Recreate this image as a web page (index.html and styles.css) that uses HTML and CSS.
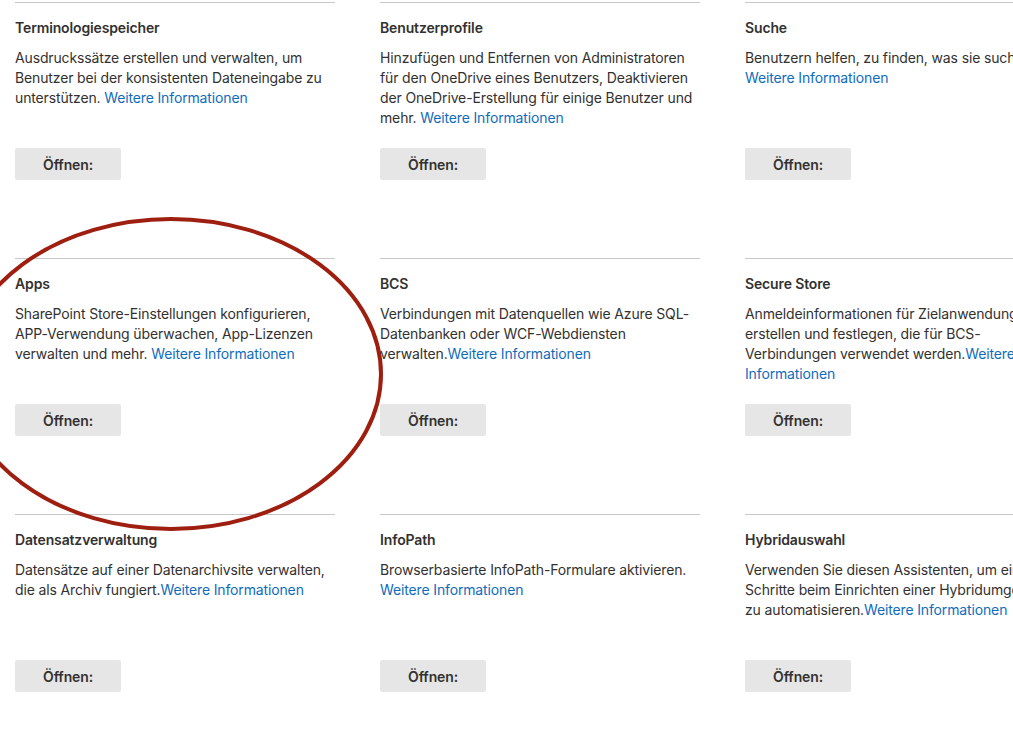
FILE: index.html
```html
<!DOCTYPE html>
<html lang="de">
<head>
<meta charset="utf-8">
<title>Weitere Features</title>
<link rel="stylesheet" href="styles.css">
</head>
<body>
<div class="page">
  <div class="grid">
    <section class="card">
      <h3 class="title">Terminologiespeicher</h3>
      <p class="desc">Ausdruckssätze erstellen und verwalten, um Benutzer bei der konsistenten Dateneingabe zu unterstützen. <a href="#">Weitere Informationen</a></p>
      <button class="btn">Öffnen:</button>
    </section>
    <section class="card">
      <h3 class="title">Benutzerprofile</h3>
      <p class="desc">Hinzufügen und Entfernen von Administratoren für den OneDrive eines Benutzers, Deaktivieren der OneDrive-Erstellung für einige Benutzer und mehr. <a href="#">Weitere Informationen</a></p>
      <button class="btn">Öffnen:</button>
    </section>
    <section class="card">
      <h3 class="title">Suche</h3>
      <p class="desc">Benutzern helfen, zu finden, was sie suchen. <a href="#">Weitere Informationen</a></p>
      <button class="btn">Öffnen:</button>
    </section>
    <section class="card">
      <h3 class="title">Apps</h3>
      <p class="desc">SharePoint Store-Einstellungen konfigurieren, APP-Verwendung überwachen, App-Lizenzen verwalten und mehr. <a href="#">Weitere Informationen</a></p>
      <button class="btn">Öffnen:</button>
    </section>
    <section class="card">
      <h3 class="title">BCS</h3>
      <p class="desc">Verbindungen mit Datenquellen wie Azure SQL-Datenbanken oder WCF-Webdiensten verwalten.<a href="#">Weitere Informationen</a></p>
      <button class="btn">Öffnen:</button>
    </section>
    <section class="card">
      <h3 class="title">Secure Store</h3>
      <p class="desc">Anmeldeinformationen für Zielanwendungen erstellen und festlegen, die für BCS-Verbindungen verwendet werden.<a href="#">Weitere Informationen</a></p>
      <button class="btn">Öffnen:</button>
    </section>
    <section class="card">
      <h3 class="title">Datensatzverwaltung</h3>
      <p class="desc">Datensätze auf einer Datenarchivsite verwalten, die als Archiv fungiert.<a href="#">Weitere Informationen</a></p>
      <button class="btn">Öffnen:</button>
    </section>
    <section class="card">
      <h3 class="title">InfoPath</h3>
      <p class="desc">Browserbasierte InfoPath-Formulare aktivieren. <a href="#">Weitere Informationen</a></p>
      <button class="btn">Öffnen:</button>
    </section>
    <section class="card">
      <h3 class="title">Hybridauswahl</h3>
      <p class="desc">Verwenden Sie diesen Assistenten, um einige Schritte beim Einrichten einer Hybridumgebung zu automatisieren.<a href="#">Weitere Informationen</a></p>
      <button class="btn">Öffnen:</button>
    </section>
  </div>
  <svg class="circle" width="440" height="320" viewBox="0 0 440 320" aria-hidden="true">
    <ellipse cx="216" cy="157" rx="210" ry="155" fill="none" stroke="#9e1f10" stroke-width="4"/>
  </svg>
</div>
</body>
</html>
```

FILE: styles.css
```css
html, body {
  margin: 0;
  padding: 0;
  background: #ffffff;
  overflow: hidden;
}

body {
  font-family: Inter, "Open Sans", "Liberation Sans", sans-serif;
  color: #323130;
  font-size: 14px;
  line-height: 20px;
  letter-spacing: -0.14px;
}

.page {
  position: relative;
  width: 1013px;
  height: 747px;
  overflow: hidden;
}

.grid {
  display: grid;
  grid-template-columns: repeat(3, 320px);
  column-gap: 45px;
  padding: 2px 0 0 15px;
  width: 1100px;
}

.card {
  border-top: 1px solid #c8c8c8;
  height: 256px;
  padding-top: 15px;
  box-sizing: border-box;
  display: flex;
  flex-direction: column;
  align-items: flex-start;
}

.title {
  margin: 0;
  font-size: 14px;
  line-height: 20px;
  font-weight: 600;
  height: 20px;
}

.desc {
  margin: 10px 0 0;
  font-size: 14px;
  line-height: 20px;
  height: 100px;
}

.desc a {
  color: #0f6cbd;
  text-decoration: none;
}

.btn {
  font-family: inherit;
  font-size: 14px;
  font-weight: 600;
  letter-spacing: -0.14px;
  color: #323130;
  background: #e6e6e6;
  border: none;
  border-radius: 2px;
  width: 106px;
  height: 32px;
  padding: 0;
  cursor: pointer;
}

.circle {
  position: absolute;
  left: -45px;
  top: 217px;
  pointer-events: none;
}
```
